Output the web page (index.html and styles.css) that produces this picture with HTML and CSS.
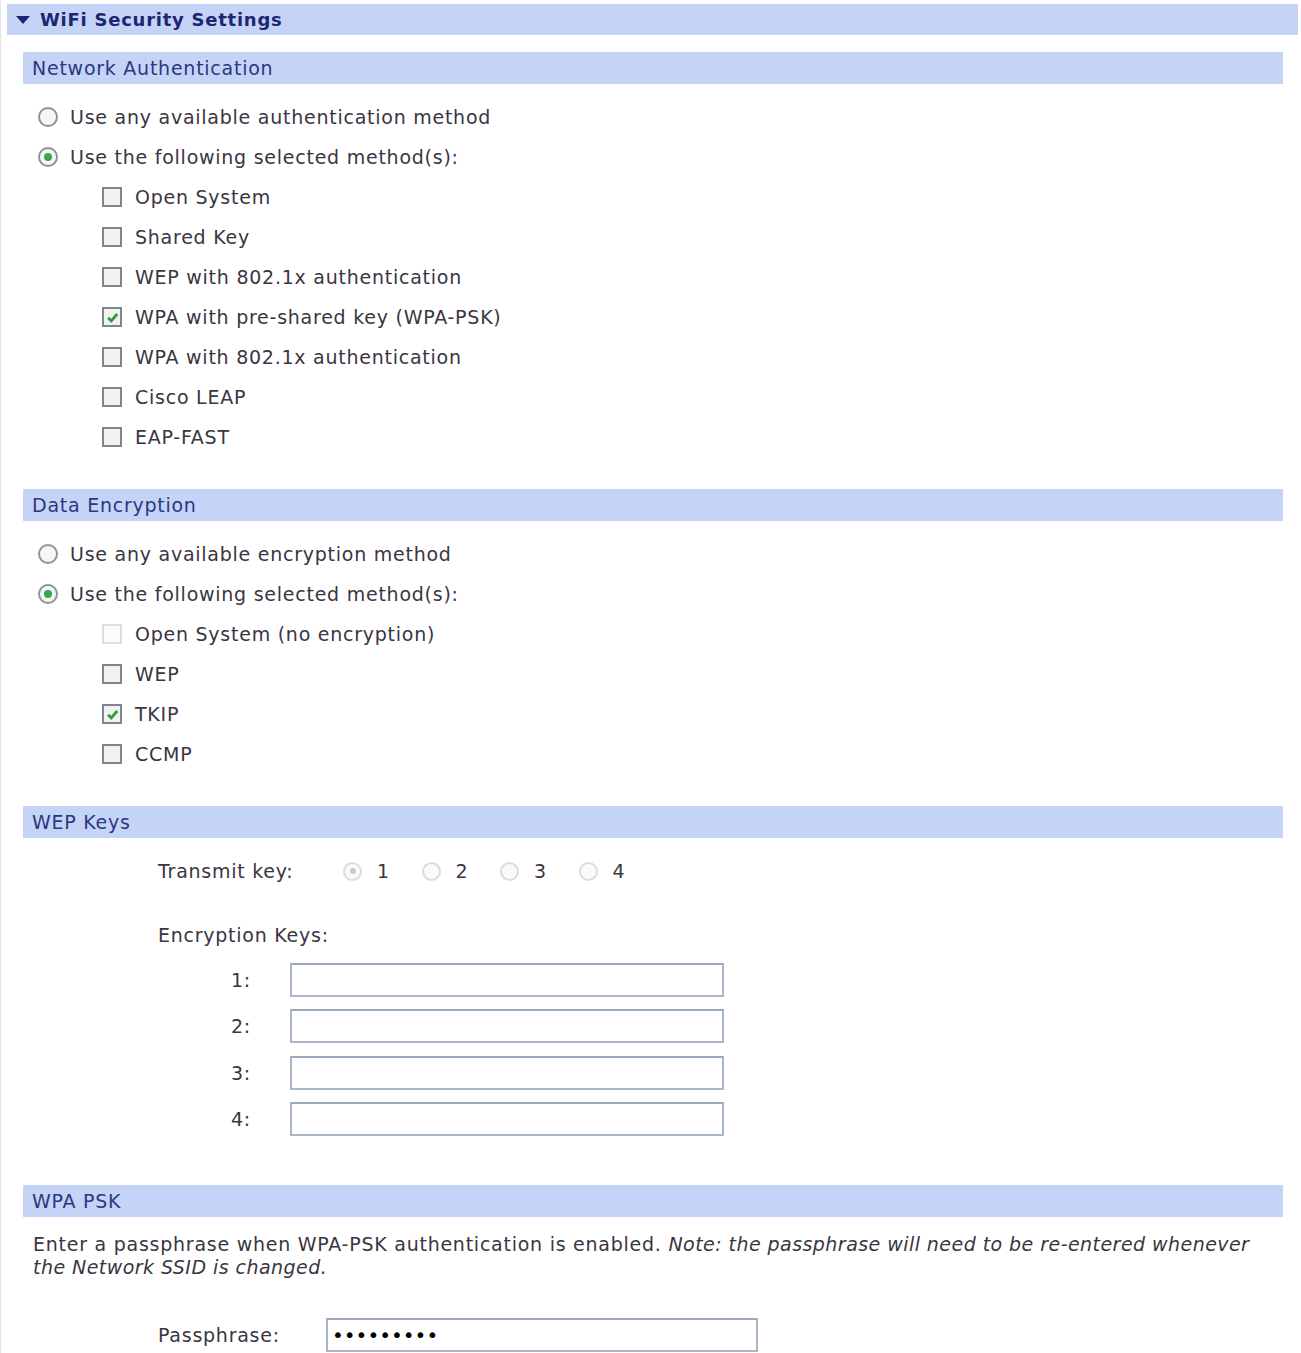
FILE: index.html
```html
<!DOCTYPE html>
<html>

<head>
    <link rel="stylesheet" href="styles.css">
</head>

<body>
    <section class="panel">
        <h1 class="panel-title"><span class="twisty"></span>WiFi Security Settings</h1>

        <section class="group">
            <h2 class="group-title">Network Authentication</h2>
            <div class="opts">
                <label class="row"><span class="radio"></span>Use any available authentication method</label>
                <label class="row"><span class="radio on"></span>Use the following selected method(s):</label>
                <label class="row sub"><span class="cb"></span>Open System</label>
                <label class="row sub"><span class="cb"></span>Shared Key</label>
                <label class="row sub"><span class="cb"></span>WEP with 802.1x authentication</label>
                <label class="row sub"><span class="cb on"><svg viewBox="0 0 12 12"><path d="M2.5 6.2 L5 8.7 L9.8 3.2" /></svg></span>WPA with pre-shared key (WPA-PSK)</label>
                <label class="row sub"><span class="cb"></span>WPA with 802.1x authentication</label>
                <label class="row sub"><span class="cb"></span>Cisco LEAP</label>
                <label class="row sub"><span class="cb"></span>EAP-FAST</label>
            </div>
        </section>

        <section class="group">
            <h2 class="group-title">Data Encryption</h2>
            <div class="opts">
                <label class="row"><span class="radio"></span>Use any available encryption method</label>
                <label class="row"><span class="radio on"></span>Use the following selected method(s):</label>
                <label class="row sub"><span class="cb off"></span>Open System (no encryption)</label>
                <label class="row sub"><span class="cb"></span>WEP</label>
                <label class="row sub"><span class="cb on"><svg viewBox="0 0 12 12"><path d="M2.5 6.2 L5 8.7 L9.8 3.2" /></svg></span>TKIP</label>
                <label class="row sub"><span class="cb"></span>CCMP</label>
            </div>
        </section>

        <section class="group">
            <h2 class="group-title">WEP Keys</h2>
            <div class="opts wep">
                <div class="row">
                    <span class="field-label">Transmit key:</span>
                    <span class="txkeys">
                        <label class="txkey"><span class="radio off on"></span>1</label>
                        <label class="txkey"><span class="radio off"></span>2</label>
                        <label class="txkey"><span class="radio off"></span>3</label>
                        <label class="txkey"><span class="radio off"></span>4</label>
                    </span>
                </div>
                <div class="row keys-head">Encryption Keys:</div>
                <div class="keys">
                    <label class="key"><span class="key-num">1:</span><input type="text" class="text-in"></label>
                    <label class="key"><span class="key-num">2:</span><input type="text" class="text-in"></label>
                    <label class="key"><span class="key-num">3:</span><input type="text" class="text-in"></label>
                    <label class="key"><span class="key-num">4:</span><input type="text" class="text-in"></label>
                </div>
            </div>
        </section>

        <section class="group">
            <h2 class="group-title">WPA PSK</h2>
            <p class="note">Enter a passphrase when WPA-PSK authentication is enabled. <em>Note: the passphrase will need to be re-entered whenever the Network SSID is changed.</em></p>
            <label class="pass-row">
                <span class="field-label">Passphrase:</span>
                <input type="password" class="text-in pass" value="secretkey">
            </label>
        </section>
    </section>
</body>

</html>
```

FILE: styles.css
```css
body {
    margin: 0;
    background: #fff;
    font-family: 'DejaVu Sans', Verdana, sans-serif;
    font-size: 19px;
    letter-spacing: 0.75px;
    color: #3b3542;
}

.panel {
    border-left: 1px solid #e6e6e6;
    padding-top: 4px;
    min-height: 1349px;
}

.panel-title {
    margin: 0 3px 0 6px;
    height: 31px;
    background: #c5d4f6;
    color: #1c2673;
    font-size: 18px;
    font-weight: bold;
    display: flex;
    align-items: center;
    padding-left: 9px;
}

.twisty {
    width: 0;
    height: 0;
    border-left: 7px solid transparent;
    border-right: 7px solid transparent;
    border-top: 8px solid #1c2673;
    margin-right: 10px;
}

.group {
    margin: 17px 18px 0 22px;
}

.group-title {
    margin: 0;
    height: 32px;
    background: #c5d4f6;
    color: #2b3783;
    font-size: 19px;
    font-weight: normal;
    display: flex;
    align-items: center;
    padding-left: 9px;
}

.opts {
    padding: 13px 0 15px 15px;
}

.row {
    height: 40px;
    display: flex;
    align-items: center;
}

.row.sub {
    padding-left: 64px;
}

.radio {
    width: 20px;
    height: 20px;
    border: 2px solid #8e9196;
    border-radius: 50%;
    box-sizing: border-box;
    margin-right: 12px;
    display: flex;
    align-items: center;
    justify-content: center;
    background: #f6f6f6;
}

.radio.on::after {
    content: "";
    width: 8px;
    height: 8px;
    border-radius: 50%;
    background: #35a84a;
}

.radio.off {
    border-color: #dcdcdc;
    background: #fafafa;
}

.radio.off.on::after {
    background: #c9c9c9;
    width: 6px;
    height: 6px;
}

.cb {
    width: 20px;
    height: 20px;
    border: 2px solid #7d8591;
    box-sizing: border-box;
    background: #f2f2f0;
    margin-right: 13px;
    display: flex;
    align-items: center;
    justify-content: center;
}

.cb.off {
    border-color: #dedede;
    background: #fbfbfb;
}

.cb svg {
    width: 15px;
    height: 15px;
}

.cb svg path {
    fill: none;
    stroke: #2e9c3c;
    stroke-width: 2.2;
}

.wep {
    padding-left: 135px;
    padding-bottom: 32px;
}

.field-label {
    width: 185px;
    flex: none;
}

.txkeys {
    display: flex;
}

.txkey {
    display: flex;
    align-items: center;
    width: 78.5px;
}

.txkey .radio {
    width: 19px;
    height: 19px;
    margin-right: 15px;
}

.keys-head {
    margin-top: 24px;
}

.keys {
    display: flex;
    flex-direction: column;
    gap: 12.4px;
    padding-top: 8px;
}

.key {
    display: flex;
    align-items: center;
}

.key-num {
    width: 132px;
    text-align: right;
    padding-right: 39px;
    box-sizing: border-box;
}

.text-in {
    width: 434px;
    height: 34px;
    box-sizing: border-box;
    border: 2px solid #a8b6c6;
    border-top-color: #9aa9ba;
    background: #fff;
    margin: 0;
    font: inherit;
    padding: 0 4px;
}

.note {
    margin: 16px 0 0 10px;
    line-height: 23px;
    padding-right: 20px;
}

.note em {
    font-style: italic;
    letter-spacing: 0.45px;
}

.pass-row {
    display: flex;
    align-items: center;
    margin-top: 39px;
    padding-left: 135px;
}

.pass-row .field-label {
    width: 168px;
}

.pass {
    width: 432px;
    font-size: 20px;
    letter-spacing: 0;
}
```
